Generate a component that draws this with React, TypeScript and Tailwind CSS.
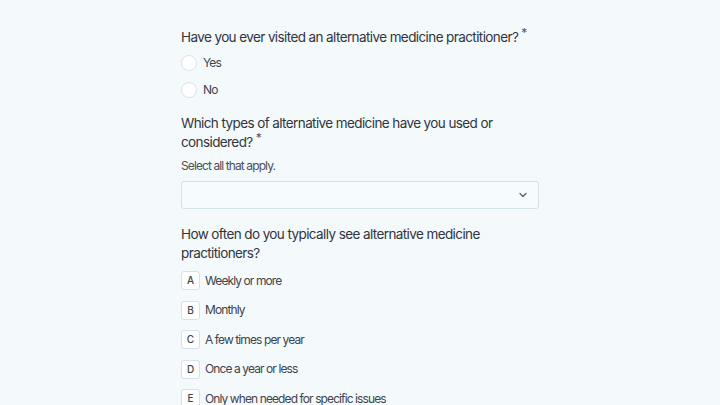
import React from "react";

const Star = () => (
  <span className="ml-[3px] inline-block leading-none text-[12px] text-[#4b5563] relative -top-[5px]">*</span>
);

export default function App() {
  const opts = [
    ["A", "Weekly or more"],
    ["B", "Monthly"],
    ["C", "A few times per year"],
    ["D", "Once a year or less"],
    ["E", "Only when needed for specific issues"],
  ];
  return (
    <div className="w-[720px] h-[405px] overflow-hidden bg-[#f4f9fc] text-[#30353c]" style={{ fontFamily: "Inter, 'Noto Sans', sans-serif" }}>
      <div className="ml-[181px] w-[358px] pt-[28px]">
        <div className="text-[13.5px] leading-[19px] tracking-[-0.6px]">
          Have you ever visited an alternative medicine practitioner?<Star />
        </div>
        <div className="mt-[8px] flex flex-col gap-[11px]">
          {["Yes", "No"].map((t) => (
            <div key={t} className="flex items-center h-[16px]">
              <span className="w-[16px] h-[16px] rounded-full bg-white border border-[#d9e3ea] shrink-0" />
              <span className="ml-[6px] text-[12px] tracking-[-0.9px] text-[#3f444b]">{t}</span>
            </div>
          ))}
        </div>
        <div className="mt-[16px] text-[13.5px] leading-[19px] tracking-[-0.6px]">
          Which types of alternative medicine have you used or considered?<Star />
        </div>
        <div className="mt-[5px] text-[12px] leading-[18px] tracking-[-0.9px] text-[#4b5058]">Select all that apply.</div>
        <div className="mt-[6px] h-[28px] rounded-[3px] border border-[#d4e2ea] bg-[#f6fbfd] flex items-center justify-end pr-[9px]">
          <svg width="12" height="12" viewBox="0 0 24 24" fill="none" stroke="#555b63" strokeWidth="2.4" strokeLinecap="round" strokeLinejoin="round"><path d="M6 9l6 6 6-6" /></svg>
        </div>
        <div className="mt-[16px] text-[13.5px] leading-[19px] tracking-[-0.6px]">
          How often do you typically see alternative medicine practitioners?
        </div>
        <div className="mt-[8px] flex flex-col gap-[10.5px]">
          {opts.map(([k, t]) => (
            <div key={k} className="flex items-center h-[19px]">
              <span className="w-[19px] h-[19px] rounded-[3px] bg-white border border-[#d4e2ea] flex items-center justify-center text-[10px] font-medium text-[#3f444b] shrink-0">{k}</span>
              <span className="ml-[5px] text-[12px] tracking-[-0.9px] text-[#3f444b]">{t}</span>
            </div>
          ))}
        </div>
      </div>
    </div>
  );
}
